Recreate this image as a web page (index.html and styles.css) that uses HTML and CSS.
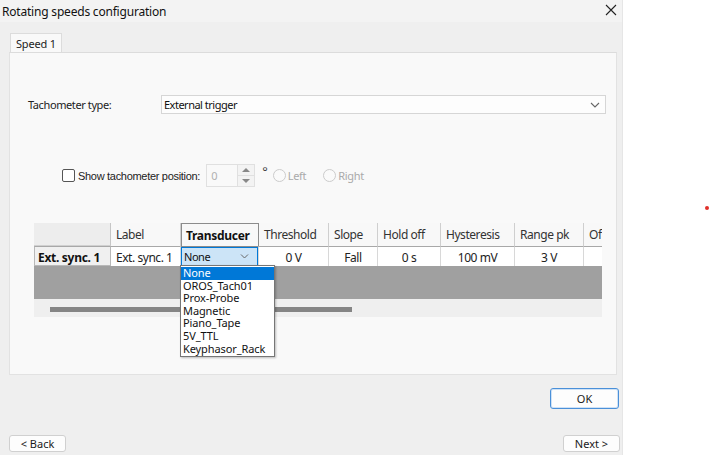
FILE: index.html
```html
<!DOCTYPE html>
<html>
<head>
<meta charset="utf-8">
<link rel="stylesheet" href="styles.css">
</head>
<body>
<div class="window">
  <div class="titlebar">
    <span class="title">Rotating speeds configuration</span>
    <svg class="close" width="12" height="12" viewBox="0 0 12 12"><path d="M1 1L11 11M11 1L1 11" stroke="#222" stroke-width="1.1" fill="none"/></svg>
  </div>
  <div class="tabstrip">
    <div class="tab">Speed 1</div>
  </div>
  <div class="panel">
    <div class="tach-row">
      <span class="tach-label">Tachometer type:</span>
      <div class="select">
        <span>External trigger</span>
        <svg width="10" height="6" viewBox="0 0 10 6"><path d="M1 1L5 5L9 1" stroke="#666" stroke-width="1.1" fill="none"/></svg>
      </div>
    </div>
    <div class="pos-row">
      <span class="checkbox"></span>
      <span class="pos-label">Show tachometer position:</span>
      <div class="spin">
        <span class="spin-val">0</span>
        <div class="spin-btns">
          <div class="spin-btn"><span class="tri-up"></span></div>
          <div class="spin-btn"><span class="tri-down"></span></div>
        </div>
      </div>
      <span class="deg">°</span>
      <span class="radio"></span><span class="radio-label">Left</span>
      <span class="radio radio2"></span><span class="radio-label">Right</span>
    </div>
    <div class="grid-wrap">
      <div class="grid">
        <div class="hcell corner"></div>
        <div class="hcell">Label</div>
        <div class="hcell active">Transducer</div>
        <div class="hcell">Threshold</div>
        <div class="hcell">Slope</div>
        <div class="hcell">Hold off</div>
        <div class="hcell">Hysteresis</div>
        <div class="hcell">Range pk</div>
        <div class="hcell last">Of</div>

        <div class="rowhead">Ext. sync. 1</div>
        <div class="cell">Ext. sync. 1</div>
        <div class="cell combo-cell"><div class="combo"><span>None</span><svg width="9" height="5" viewBox="0 0 9 5"><path d="M1 0.5L4.5 4L8 0.5" stroke="#666" stroke-width="1" fill="none"/></svg></div></div>
        <div class="cell center">0 V</div>
        <div class="cell center">Fall</div>
        <div class="cell center">0 s</div>
        <div class="cell center">100 mV</div>
        <div class="cell center">3 V</div>
        <div class="cell last"></div>
      </div>
      <div class="gray-area"></div>
      <div class="hscroll"><div class="thumb"></div></div>
      <ul class="dropdown">
        <li class="sel">None</li>
        <li>OROS_Tach01</li>
        <li>Prox-Probe</li>
        <li>Magnetic</li>
        <li>Piano_Tape</li>
        <li>5V_TTL</li>
        <li>Keyphasor_Rack</li>
      </ul>
    </div>
  </div>
  <div class="ok-row"><button class="btn ok">OK</button></div>
  <div class="nav-row">
    <button class="btn nav">&lt; Back</button>
    <button class="btn nav">Next &gt;</button>
  </div>
</div>
<span class="reddot"></span>
</body>
</html>
```
FILE: styles.css
```css
* { box-sizing: border-box; }
html, body { margin: 0; padding: 0; background: #ffffff; }
body { font-family: "Noto Sans", "Open Sans", sans-serif; color: #1a1a1a; position: relative; width: 711px; height: 455px; overflow: hidden; }

.window { width: 623px; height: 455px; background: #efefef; border-right: 1px solid #e6e6e6; }

.titlebar { height: 22px; background: #f3f3f3; display: flex; align-items: center; justify-content: space-between; padding: 0 5px 0 2px; }
.title { font-size: 12px; color: #111; letter-spacing: -0.2px; }
.close { margin-top: -3px; }

.tabstrip { height: 30px; padding: 11px 0 0 10px; display: flex; }
.tab { width: 52px; height: 19px; background: #f9f9f9; border: 1px solid #dcdcdc; border-bottom: none; font-size: 11px; padding: 2px 0 0 5px; color: #222; letter-spacing: -0.2px; }

.panel { position: relative; margin-left: 9px; width: 608px; height: 323px; background: #f9f9f9; border: 1px solid #e2e2e2; border-top-color: #dcdcdc; }

.tach-row { display: flex; align-items: center; margin-top: 42px; height: 19px; }
.tach-label { font-size: 11px; margin-left: 18px; width: 133px; color: #222; letter-spacing: -0.4px; }
.select { width: 445px; height: 19px; background: #fdfdfd; border: 1px solid #d6d6d6; display: flex; align-items: center; justify-content: space-between; padding: 0 5px 0 2px; font-size: 11px; color: #111; letter-spacing: -0.5px; }

.pos-row { display: flex; align-items: center; margin-top: 50px; height: 23px; font-size: 11px; }
.checkbox { width: 13px; height: 13px; border: 1px solid #555; border-radius: 2px; background: #fff; margin-left: 52px; }
.pos-label { margin-left: 3px; color: #222; font-family: "Liberation Sans", sans-serif; font-size: 11px; letter-spacing: -0.3px; }
.spin { margin-left: 6px; width: 49px; height: 23px; border: 1px solid #e0e0e0; background: #f9f9f9; display: flex; }
.spin-val { flex: 1; color: #b0b0b0; padding: 3px 0 0 4px; font-size: 11px; }
.spin-btns { width: 17px; display: flex; flex-direction: column; border-left: 1px solid #e0e0e0; }
.spin-btn { flex: 1; display: flex; align-items: center; justify-content: center; border-bottom: 1px solid #e0e0e0; background: #f3f3f3; }
.spin-btn:last-child { border-bottom: none; }
.tri-up { width: 0; height: 0; border-left: 4px solid transparent; border-right: 4px solid transparent; border-bottom: 4px solid #888; }
.tri-down { width: 0; height: 0; border-left: 4px solid transparent; border-right: 4px solid transparent; border-top: 4px solid #888; }
.deg { margin-left: 7px; margin-top: -9px; font-size: 13px; color: #444; }
.radio { width: 13px; height: 13px; border: 1px solid #ccc; border-radius: 50%; background: #fafafa; margin-left: 5px; }
.radio2 { margin-left: 17px; }
.radio-label { margin-left: 2px; color: #aaa; letter-spacing: -0.3px; }

.grid-wrap { position: relative; margin: 36px 0 0 24px; width: 568px; }
.grid { display: grid; grid-template-columns: 77px 70px 78px 70px 49px 63px 74px 69px 18px; font-size: 12px; letter-spacing: -0.45px; }
.hcell { height: 23px; background: #f8f8f8; border-right: 1px solid #cfcfcf; padding: 3px 0 0 5px; color: #333; white-space: nowrap; overflow: hidden; }
.hcell.corner { background: #ededed; border-right: 1px solid #c6c6c6; border-bottom: 1px solid #d0d0d0; }
.hcell.active { font-weight: bold; color: #111; border: 1px solid #8c8c8c; border-bottom: none; padding-left: 4px; letter-spacing: -0.3px; }
.hcell.last { border-right: none; }
.rowhead { height: 20px; background: #f0f0f0; border: 1px solid #b8b8b8; border-top: 1px solid #a8a8a8; font-weight: bold; padding: 2px 0 0 3px; white-space: nowrap; color: #111; letter-spacing: -0.3px; }
.cell { height: 20px; background: #fff; border-right: 1px solid #d8d8d8; border-top: 1px solid #a8a8a8; padding: 2px 0 0 5px; white-space: nowrap; color: #222; }
.cell.center { text-align: center; padding-left: 0; }
.cell.last { border-right: none; }
.combo-cell { padding: 0; border-top: 1px solid #8c8c8c; }
.combo { height: 19px; background: #cce4f7; border: 1px solid #0078d7; display: flex; align-items: center; justify-content: space-between; padding: 0 8px 0 2px; font-size: 11px; color: #111; }

.gray-area { height: 33px; background: #a0a0a0; }
.hscroll { height: 18px; background: #efefef; padding: 8px 0 0 16px; }
.thumb { width: 302px; height: 5px; background: #858585; }

.dropdown { position: absolute; left: 146px; top: 42px; width: 95px; margin: 0; padding: 1px 0; list-style: none; background: #fff; border: 1px solid #767676; box-shadow: 1px 1px 2px rgba(0,0,0,0.25); font-size: 11px; line-height: 12.6px; letter-spacing: -0.1px; }
.dropdown li { padding-left: 2px; color: #111; }
.dropdown li.sel { background: #0078d7; color: #fff; }

.btn { font-family: "Noto Sans", "Open Sans", sans-serif; font-size: 11px; color: #1a1a1a; background: #fdfdfd; border: 1px solid #d0d0d0; border-radius: 3px; padding: 0; }
.ok-row { display: flex; justify-content: flex-end; padding: 13px 3px 0 0; }
.ok { width: 69px; height: 21px; border: 1px solid #4a90d9; box-shadow: inset 0 0 0 1px #cfe2f6; }
.nav-row { display: flex; justify-content: space-between; padding: 26px 2px 0 9px; }
.nav { width: 57px; height: 17px; }

.reddot { position: absolute; left: 705px; top: 206px; width: 4px; height: 4px; border-radius: 50%; background: #e0302a; }
```
